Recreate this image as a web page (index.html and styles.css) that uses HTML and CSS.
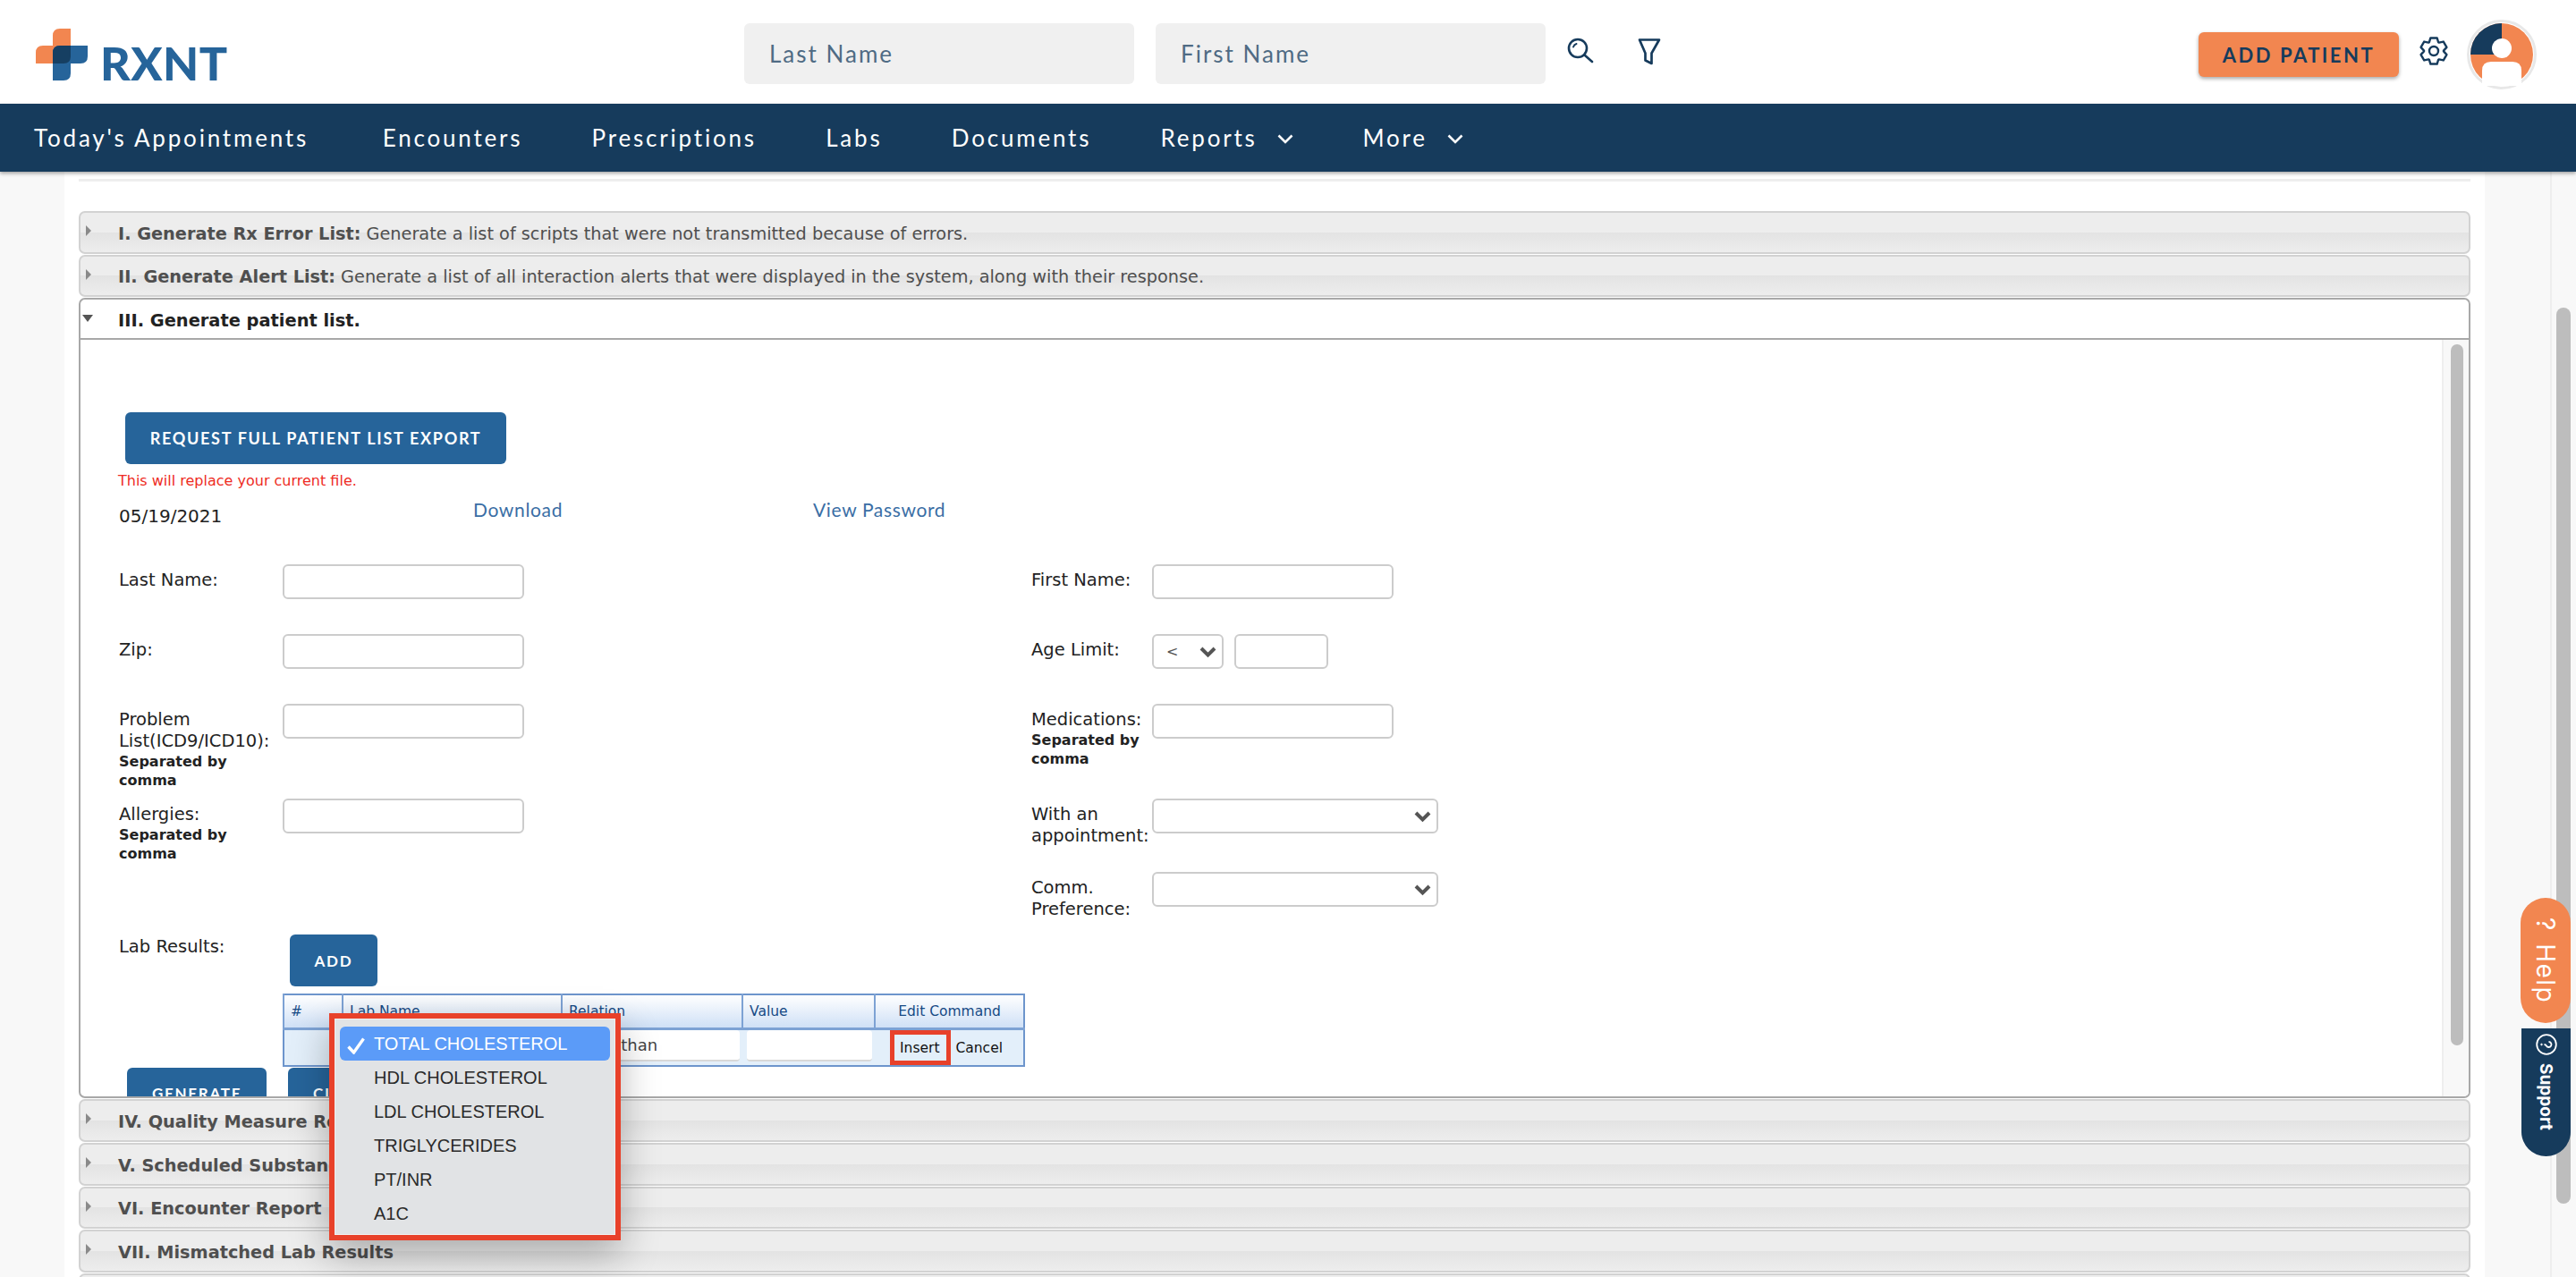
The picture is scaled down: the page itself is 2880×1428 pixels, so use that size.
FILE: index.html
```html
<!DOCTYPE html>
<html lang="en">
<head>
<meta charset="utf-8">
<title>RXNT</title>
<link rel="stylesheet" href="styles.css">
</head>
<body>
<header class="topbar">
  <div class="logo">
    <svg class="logo-mark" viewBox="0 0 58 58" width="58" height="58">
      <path fill="#f28650" d="M19 8Q19 0 27 0H39V31Q39 39 31 39H0V27Q0 19 8 19H19z"/>
      <path fill="#26649a" d="M27 19H58V31Q58 39 50 39H39V50Q39 58 31 58H19V27Q19 19 27 19z"/>
      <path fill="#163f62" d="M27 19H39V31Q39 39 31 39H19V27Q19 19 27 19z"/>
    </svg>
    <span class="logo-text">RXNT</span>
  </div>
  <input class="search-field" type="text" placeholder="Last Name">
  <input class="search-field" type="text" placeholder="First Name">
  <svg class="icon-search" viewBox="0 0 30 30" width="30" height="30" fill="none" stroke="#163b5c" stroke-width="2.600" stroke-linecap="round">
    <circle cx="12" cy="12" r="10"/><path d="M19.500 19.500L28 27"/><path d="M7 10.500a5.500 5.500 0 0 1 3.500-3.500" stroke-width="2"/>
  </svg>
  <svg class="icon-funnel" viewBox="0 0 26 30" width="26" height="30" fill="none" stroke="#163b5c" stroke-width="2.700" stroke-linejoin="round">
    <path d="M2 1.500H24L15.500 16.500V28L8.500 24.500V16.500Z"/>
  </svg>
  <div class="top-actions">
    <button class="add-patient" type="button">ADD PATIENT</button>
    <svg class="icon-gear" viewBox="0 0 32 32" width="32" height="32" fill="none" stroke="#163b5c" stroke-width="2.400" stroke-linejoin="round">
      <path d="M10.840 6.290L12.370 1.450H19.630L21.160 6.290L21.830 6.670L26.790 5.580L30.420 11.870L26.990 15.620V16.380L30.420 20.130L26.790 26.420L21.830 25.330L21.160 25.710L19.630 30.550H12.370L10.840 25.710L10.170 25.330L5.210 26.420L1.580 20.130L5.010 16.380V15.620L1.580 11.870L5.210 5.580L10.170 6.670Z"/>
      <circle cx="16" cy="16" r="5"/>
    </svg>
    <div class="avatar">
      <svg viewBox="0 0 70 70" width="70" height="70">
        <circle cx="35" cy="35" r="35" fill="#f28650"/>
        <path fill="#163b5c" d="M35 0V35H0A35 35 0 0 1 35 0z"/>
        <circle cx="35" cy="28" r="11" fill="#fff"/>
        <path fill="#fff" d="M13 70V53Q13 43 23 43H47Q57 43 57 53V70z"/>
      </svg>
    </div>
  </div>
</header>

<nav class="mainnav">
  <a class="nav-link nav-first">Today's Appointments</a>
  <a class="nav-link">Encounters</a>
  <a class="nav-link">Prescriptions</a>
  <a class="nav-link">Labs</a>
  <a class="nav-link">Documents</a>
  <a class="nav-link">Reports
    <svg class="nav-chevron" viewBox="0 0 18 11" width="18" height="11" fill="none" stroke="#fff" stroke-width="2.600"><path d="M1.500 1.500L9 9l7.500-7.500"/></svg>
  </a>
  <a class="nav-link">More
    <svg class="nav-chevron" viewBox="0 0 18 11" width="18" height="11" fill="none" stroke="#fff" stroke-width="2.600"><path d="M1.500 1.500L9 9l7.500-7.500"/></svg>
  </a>
</nav>

<div class="page">
  <main class="card">
    <div class="rule"></div>
    <section class="acc">
      <div class="acc-head"><i class="tri"></i><b>I. Generate Rx Error List:</b>&nbsp;Generate a list of scripts that were not transmitted because of errors.</div>
      <div class="acc-head"><i class="tri"></i><b>II. Generate Alert List:</b>&nbsp;Generate a list of all interaction alerts that were displayed in the system, along with their response.</div>

      <div class="acc-panel">
        <div class="panel-head"><i class="tri-down"></i><b>III. Generate patient list.</b></div>
        <div class="panel-body">
          <div class="panel-content">
            <button class="btn btn-export" type="button">REQUEST FULL PATIENT LIST EXPORT</button>
            <p class="warn">This will replace your current file.</p>
            <div class="file-row">
              <span class="file-date">05/19/2021</span>
              <a class="file-link file-download">Download</a>
              <a class="file-link">View Password</a>
            </div>

            <div class="form-grid">
              <div class="field"><label class="lbl lbl-left">Last Name:</label><input class="txt" type="text"></div>
              <div class="field"><label class="lbl lbl-right">First Name:</label><input class="txt" type="text"></div>

              <div class="field"><label class="lbl lbl-left">Zip:</label><input class="txt" type="text"></div>
              <div class="field"><label class="lbl lbl-right">Age Limit:</label>
                <select class="sel sel-age"><option>&lt;</option></select><input class="txt txt-age" type="text">
              </div>

              <div class="field"><label class="lbl lbl-left">Problem<br>List(ICD9/ICD10):<small>Separated by<br>comma</small></label><input class="txt" type="text"></div>
              <div class="field"><label class="lbl lbl-right">Medications:<small>Separated by<br>comma</small></label><input class="txt" type="text"></div>

              <div class="field"><label class="lbl lbl-left">Allergies:<small>Separated by<br>comma</small></label><input class="txt" type="text"></div>
              <div class="field"><label class="lbl lbl-right">With an<br>appointment:</label><select class="sel sel-wide"><option></option></select></div>

              <div class="field"></div>
              <div class="field"><label class="lbl lbl-right">Comm.<br>Preference:</label><select class="sel sel-wide"><option></option></select></div>
            </div>

            <div class="lab-row">
              <span class="lab-label">Lab Results:</span>
              <button class="btn btn-add" type="button">ADD</button>
            </div>
            <table class="lab-table">
              <thead>
                <tr><th class="c-num">#</th><th class="c-name">Lab Name</th><th class="c-rel">Relation</th><th class="c-val">Value</th><th class="c-edit">Edit Command</th></tr>
              </thead>
              <tbody>
                <tr>
                  <td></td><td></td>
                  <td><input class="cell-input" type="text" value="Less than"></td>
                  <td><input class="cell-input" type="text"></td>
                  <td class="cell-cmd"><a class="cmd cmd-insert">Insert</a><a class="cmd">Cancel</a></td>
                </tr>
              </tbody>
            </table>
            <div class="action-row">
              <button class="btn btn-gen" type="button">GENERATE</button>
              <button class="btn btn-gen" type="button">CLEAR</button>
            </div>
          </div>
          <div class="panel-scroll"><div class="panel-thumb"></div></div>
        </div>
      </div>

      <div class="acc-head"><i class="tri"></i><b>IV. Quality Measure Reports</b></div>
      <div class="acc-head"><i class="tri"></i><b>V. Scheduled Substance Report</b></div>
      <div class="acc-head"><i class="tri"></i><b>VI. Encounter Report</b></div>
      <div class="acc-head"><i class="tri"></i><b>VII. Mismatched Lab Results</b></div>
      <div class="acc-head"></div>
    </section>
  </main>
  <div class="page-scroll"><div class="page-thumb"></div></div>
</div>

<div class="picker">
  <div class="picker-item is-selected">
    <svg class="check" viewBox="0 0 20 19" width="20" height="19" fill="none" stroke="#fff" stroke-width="3.400"><path d="M1.500 10.500L7.500 17L18.500 1.500"/></svg>TOTAL CHOLESTEROL
  </div>
  <div class="picker-item">HDL CHOLESTEROL</div>
  <div class="picker-item">LDL CHOLESTEROL</div>
  <div class="picker-item">TRIGLYCERIDES</div>
  <div class="picker-item">PT/INR</div>
  <div class="picker-item">A1C</div>
</div>

<a class="tab-help">? Help</a>
<a class="tab-support">
  <svg class="support-icon" viewBox="0 0 24 24" width="24" height="24" fill="none" stroke="#fff" stroke-width="1.800"><circle cx="12" cy="12" r="10.800"/><path d="M9 9.500a3 3 0 1 1 4.500 2.600c-1 .6-1.500 1.200-1.500 2.400" stroke-width="1.800"/><circle cx="12" cy="17.500" r=".8" fill="#fff" stroke-width="1"/></svg>
  <span>Support</span>
</a>
</body>
</html>
```
FILE: styles.css
```css
* { box-sizing: border-box; }
html, body { margin: 0; padding: 0; }
body {
  width: 2880px;
  height: 1428px;
  overflow: hidden;
  position: relative;
  background: #f8f8f8;
  font-family: "DejaVu Sans", Verdana, sans-serif;
  color: #222;
}

/* top bar */
.topbar {
  height: 116px;
  background: #fff;
  display: flex;
  align-items: flex-start;
}
.logo {
  display: flex;
  align-items: flex-end;
  margin: 32px 0 0 40px;
  width: 792px;
  height: 58px;
}
.logo-mark { flex: none; }
.logo-text {
  margin-left: 14px;
  font-family: Lato, sans-serif;
  font-weight: 900;
  font-size: 52px;
  line-height: 39px;
  height: 39px;
  letter-spacing: .5px;
  color: #26649a;
}
.search-field {
  width: 436px;
  height: 68px;
  margin: 26px 24px 0 0;
  padding: 0 28px;
  border: 0;
  border-radius: 6px;
  background: #f0f0f0;
  font-family: Lato, sans-serif;
  font-size: 26px;
  letter-spacing: 2px;
}
.search-field::placeholder { color: #4f6b84; opacity: 1; }
.icon-search { margin: 42px 0 0 0; flex: none; }
.icon-funnel { margin: 43px 0 0 49px; flex: none; }
.top-actions {
  margin-left: 601px;
  display: flex;
  align-items: flex-start;
}
.add-patient {
  width: 224px;
  height: 50px;
  margin-top: 36px;
  border: 0;
  border-radius: 6px;
  background: #f28650;
  box-shadow: 0 2px 4px rgba(0, 0, 0, .35);
  color: #163b5c;
  font-family: Lato, sans-serif;
  font-weight: 700;
  font-size: 22px;
  letter-spacing: 2.500px;
}
.icon-gear { margin: 41px 0 0 22.500px; flex: none; }
.avatar {
  margin: 22px 0 0 21.500px;
  width: 78px;
  height: 78px;
  padding: 1px;
  border: 3px solid #e8e8e8;
  border-radius: 50%;
  flex: none;
}
.avatar svg { display: block; }

/* main nav */
.mainnav {
  height: 76px;
  padding-left: 38px;
  background: #163b5c;
  box-shadow: 0 2px 4px rgba(0, 0, 0, .35);
  display: flex;
  align-items: center;
  position: relative;
  gap: 77.300px;
}
.nav-link {
  color: #fff;
  font-family: Lato, sans-serif;
  font-size: 26px;
  letter-spacing: 2.800px;
  white-space: nowrap;
}
.nav-first { margin-right: 5.500px; }
.nav-chevron { margin-left: 13px; vertical-align: 3px; }

/* page */
.page {
  height: 1236px;
  padding-left: 72px;
  display: flex;
}
.card {
  width: 2706px;
  height: 100%;
  padding: 8px 16px 0;
  background: #fff;
  flex: none;
}
.rule { height: 3px; background: #eee; }
.acc { margin-top: 33px; width: 2674px; }
.acc-head {
  height: 47.670px;
  margin-bottom: 1px;
  padding: 3px 0 0 42px;
  border: 2px solid #d2d2d2;
  border-radius: 7px;
  background: linear-gradient(#ededed 0, #ededed 50%, #e3e3e3 50%, #ededed 100%);
  display: flex;
  align-items: center;
  position: relative;
  font-size: 19.300px;
  color: #4f4f4f;
  white-space: nowrap;
}
.acc-head b { font-weight: 700; }
.tri {
  position: absolute;
  left: 6px;
  top: 14px;
  border-left: 6px solid #8a8a8a;
  border-top: 6px solid transparent;
  border-bottom: 6px solid transparent;
}
.acc-panel {
  height: 895px;
  margin-bottom: 1px;
  border: 2px solid #a8a8a8;
  border-radius: 7px;
  background: #fff;
  overflow: hidden;
}
.panel-head {
  height: 43px;
  padding: 4px 0 0 42px;
  display: flex;
  align-items: center;
  position: relative;
  font-size: 19.400px;
  color: #222;
}
.tri-down {
  position: absolute;
  left: 2px;
  top: 17px;
  border-top: 8px solid #555;
  border-left: 6px solid transparent;
  border-right: 6px solid transparent;
}
.panel-body {
  height: 848px;
  border-top: 2px solid #a8a8a8;
  display: flex;
}
.panel-content {
  flex: 1;
  padding: 81px 0 0 43px;
}
.panel-scroll {
  width: 30px;
  padding: 5px 6px 0 8px;
  background: #f8f8f8;
  border-left: 2px solid #eee;
  flex: none;
}
.panel-thumb { height: 784px; border-radius: 8px; background: #bdbdbd; }

/* buttons */
.btn {
  border: 0;
  border-radius: 6px;
  background: #26649a;
  color: #fff;
  font-family: Lato, sans-serif;
  font-weight: 700;
  font-size: 18px;
  letter-spacing: 1.700px;
}
.btn-export { display: block; width: 426px; height: 58px; margin-left: 7px; }
.warn {
  margin: 8px 0 0 -1px;
  height: 22px;
  line-height: 22px;
  font-size: 16px;
  color: #ee2c24;
}
.file-row { height: 82px; display: flex; align-items: flex-start; font-size: 20px; }
.file-date { width: 396px; margin-top: 16px; line-height: 24px; }
.file-link {
  margin-top: 9px;
  line-height: 24px;
  font-family: Lato, sans-serif;
  font-size: 21px;
  letter-spacing: .65px;
  color: #3a6ea5;
}
.file-download { width: 380px; }

/* form */
.form-grid {
  display: grid;
  grid-template-columns: 1020px 1fr;
  grid-template-rows: 78px 78px 106px 82px 70px;
}
.field { display: flex; align-items: flex-start; }
.lbl {
  flex: none;
  padding-top: 6px;
  font-size: 19.500px;
  line-height: 24px;
  white-space: nowrap;
}
.lbl-left { width: 183px; }
.lbl-right { width: 135px; }
.lbl small {
  display: block;
  font-size: 16px;
  font-weight: 700;
  line-height: 21px;
}
.txt {
  width: 270px;
  height: 39px;
  border: 2px solid #ccc;
  border-radius: 6px;
  background: #fff;
  flex: none;
}
.txt-age { width: 105px; margin-left: 12px; }
.sel {
  height: 39px;
  padding: 0 14px;
  border: 2px solid #ccc;
  border-radius: 6px;
  background: #fff url("data:image/svg+xml,%3Csvg xmlns='http://www.w3.org/2000/svg' width='19' height='14' viewBox='0 0 19 14'%3E%3Cpath d='M2 3l7.500 7.500 7.500-7.500' fill='none' stroke='%23555' stroke-width='4'/%3E%3C/svg%3E") no-repeat right 6px center;
  appearance: none;
  -webkit-appearance: none;
  font-family: "DejaVu Sans", sans-serif;
  font-size: 16px;
  color: #555;
  flex: none;
}
.sel-age { width: 80px; }
.sel-wide { width: 320px; }

/* lab results */
.lab-row { display: flex; align-items: flex-start; height: 66px; }
.lab-label { width: 191px; font-size: 19.500px; line-height: 24px; margin-top: 2px; }
.btn-add { width: 98px; height: 58px; font-size: 17px; }
.lab-table {
  width: 828px;
  margin-left: 183px;
  border-collapse: collapse;
  table-layout: fixed;
  border: 2px solid #6d95cc;
  background: #e3effa;
  font-size: 15.500px;
  color: #174a85;
}
.lab-table th {
  height: 38px;
  padding: 0 7px;
  font-weight: 400;
  text-align: left;
  border-left: 2px solid #7da2d4;
  border-bottom: 3px solid #7da2d4;
  background: linear-gradient(#fff, #cfe0f6);
}
.lab-table th.c-edit { text-align: center; }
.lab-table td { height: 39px; padding: 0; color: #222; }
.c-num { width: 66px; }
.c-name { width: 245px; }
.c-rel { width: 202px; }
.c-val { width: 148px; }
.c-edit { width: 167px; }
.cell-input {
  display: block;
  width: 194px;
  height: 35px;
  margin: 0 0 3px 5px;
  padding: 0 0 0 16px;
  border: 0;
  border-bottom: 2px solid #d8d8d8;
  border-radius: 4px;
  background: #fff;
  font-family: "DejaVu Sans", sans-serif;
  font-size: 18px;
  color: #444;
}
.lab-table td:nth-child(4) .cell-input { width: 140px; }
.cell-cmd { white-space: nowrap; }
.cmd { font-size: 15.500px; color: #111; }
.cmd-insert {
  display: inline-block;
  margin: 0 5px 0 17px;
  padding: 9px 13px 8px 11px;
  line-height: 22px;
  outline: 5px solid #e8412a;
  outline-offset: -5px;
}
.action-row { display: flex; gap: 24px; margin: 1px 0 0 9px; }
.btn-gen { height: 58px; padding: 0 28px; font-size: 17px; flex: none; }

/* native popup menu that lies over the table and the accordion */
.picker {
  position: absolute;
  left: 368px;
  top: 1133px;
  width: 326px;
  height: 254px;
  padding: 9px 6px;
  border: 6px solid #e8412a;
  background: #e1e3e5;
  box-shadow: 0 16px 40px rgba(0, 0, 0, .28), inset 0 0 0 1px #f0f0f0;
  font-family: "Liberation Sans", Arial, sans-serif;
  font-size: 20px;
  color: #2a2a2a;
}
.picker-item {
  height: 38px;
  line-height: 38px;
  padding-left: 38px;
  border-radius: 6px;
  position: relative;
}
.picker-item.is-selected { background: #5b9bf8; color: #fff; }
.check { position: absolute; left: 8px; top: 12px; }

/* page scrollbar */
.page-scroll {
  width: 29px;
  margin-left: 73px;
  padding: 152px 6px 0 5px;
  border-left: 2px solid #eee;
  flex: none;
}
.page-thumb { width: 16px; height: 1002px; border-radius: 8px; background: #bdbdbd; }

/* floating tabs */
.tab-help {
  position: absolute;
  left: 2818px;
  top: 1004px;
  width: 56px;
  height: 140px;
  border-radius: 28px;
  background: #f28650;
  color: #fff;
  writing-mode: vertical-rl;
  text-align: center;
  line-height: 56px;
  font-family: Inter, sans-serif;
  font-size: 28px;
  letter-spacing: 1.500px;
  word-spacing: 4px;
}
.tab-support {
  position: absolute;
  left: 2819px;
  top: 1150px;
  width: 55px;
  height: 143px;
  border-radius: 0 0 28px 28px;
  background: #163b5c;
  color: #fff;
  display: flex;
  flex-direction: column;
  align-items: center;
  padding-top: 6px;
}
.support-icon { flex: none; transform: rotate(90deg); }
.tab-support span {
  margin-top: 9px;
  writing-mode: vertical-rl;
  font-family: Inter, sans-serif;
  font-weight: 700;
  font-size: 19px;
}
```
